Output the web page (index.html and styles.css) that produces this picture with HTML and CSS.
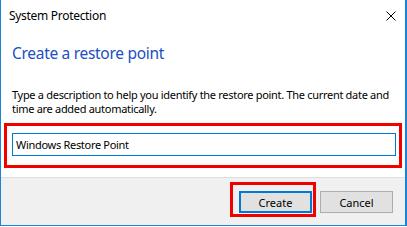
FILE: index.html
```html
<!DOCTYPE html>
<html lang="en">
<head>
    <meta charset="UTF-8">
    <meta name="viewport" content="width=device-width, initial-scale=1.0">
    <title>System Protection</title>
    <link rel="stylesheet" href="styles.css">
</head>
<body>
    <div class="window">
        <div class="titleBar">
            <span class="titleText">System Protection</span>
            <svg class="closeIcon" width="10" height="10" viewBox="0 0 10 10">
                <path d="M0.5 0.5 L9.5 9.5 M9.5 0.5 L0.5 9.5" stroke="#000" stroke-width="1" fill="none"/>
            </svg>
        </div>

        <div class="content">
            <h1 class="instruction">Create a restore point</h1>
            <p class="description">Type a description to help you identify the restore point. The current date and<br>time are added automatically.</p>
            <div class="highlight inputHighlight">
                <div class="textBox">Windows Restore Point</div>
            </div>
        </div>

        <div class="footer">
            <div class="highlight buttonHighlight">
                <button class="btn btnDefault">Create</button>
            </div>
            <button class="btn">Cancel</button>
        </div>
    </div>
</body>
</html>
```

FILE: styles.css
```css
body {
    margin: 0;
    padding: 0;
    background-color: #fff;
    font-family: "Noto Sans", "Open Sans", sans-serif;
    font-size: 12px;
    letter-spacing: -0.3px;
    color: #000;
}

.window {
    width: 407px;
    height: 226px;
    box-sizing: border-box;
    border: 1px solid #1883d7;
    border-top: 0;
    border-right-width: 2px;
    display: flex;
    flex-direction: column;
    background-color: #fff;
}

.titleBar {
    height: 31px;
    display: flex;
    align-items: center;
    justify-content: space-between;
    padding: 0 9px 0 8px;
}

.titleText {
    font-size: 12px;
    line-height: 14px;
}

.closeIcon {
    display: block;
}

.content {
    display: flex;
    flex-direction: column;
}

.instruction {
    margin: 12px 0 0 11px;
    font-size: 15.5px;
    line-height: 20px;
    letter-spacing: -0.3px;
    font-weight: normal;
    color: #1c4fc4;
}

.description {
    margin: 25px 0 0 11px;
    font-size: 11px;
    line-height: 14px;
    letter-spacing: -0.3px;
    white-space: nowrap;
}

.highlight {
    border: 3px solid #f20000;
}

.inputHighlight {
    margin: 7px 0 0 3px;
    width: 398px;
    height: 45px;
    box-sizing: border-box;
    padding: 7px 3px 0 5px;
}

.textBox {
    height: 23px;
    box-sizing: border-box;
    border: 1px solid #0078d7;
    background-color: #fff;
    padding-left: 3px;
    font-size: 11px;
    display: flex;
    align-items: center;
}

.footer {
    margin-top: auto;
    height: 48px;
    box-sizing: border-box;
    border-top: 1px solid #dfdfdf;
    background-color: #f0f0f0;
    display: flex;
    justify-content: flex-end;
    align-items: flex-start;
    padding: 4px 12px 0 0;
}

.buttonHighlight {
    width: 86px;
    height: 35px;
    box-sizing: border-box;
    padding: 6px 0 0 6px;
}

.btn {
    width: 73px;
    height: 22px;
    box-sizing: border-box;
    margin: 0;
    padding: 0;
    font-family: inherit;
    font-size: 11px;
    letter-spacing: 0;
    color: #000;
    background-color: #e1e1e1;
    border: 1px solid #adadad;
}

.footer > .btn {
    margin: 9px 0 0 4px;
}

.btnDefault {
    border: 2px solid #0078d7;
}
```
